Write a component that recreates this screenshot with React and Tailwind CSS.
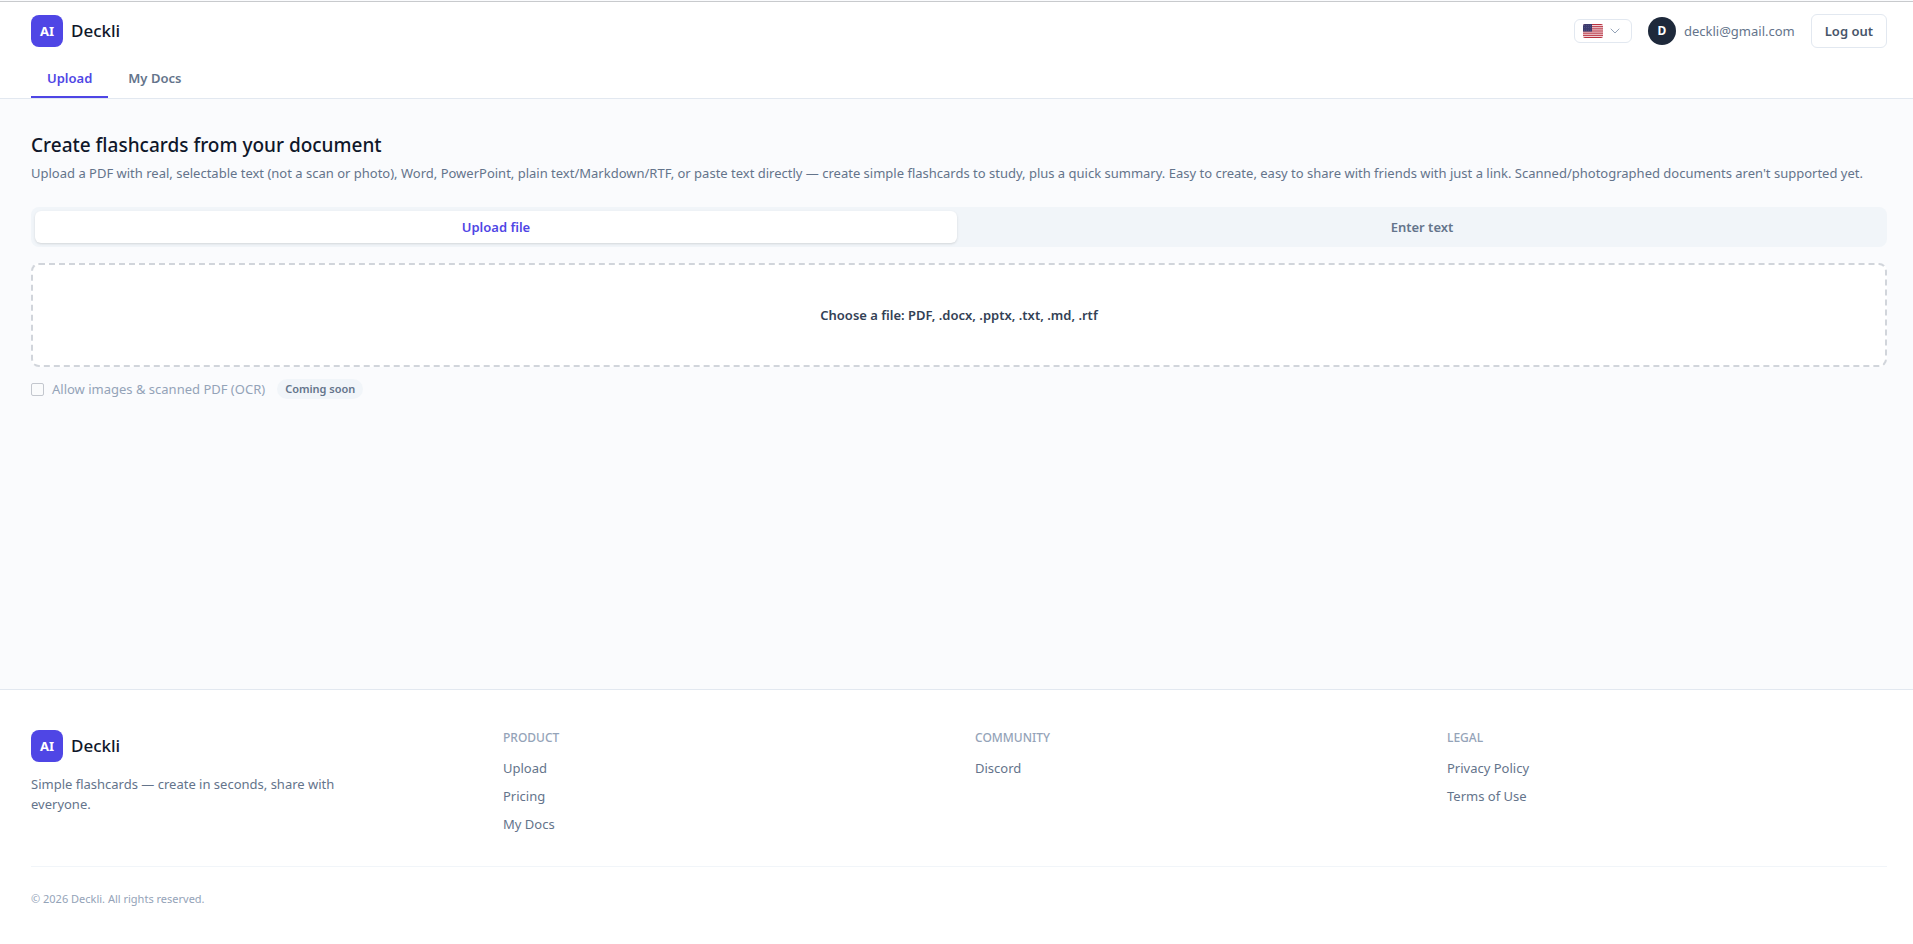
import { useState } from "react";
import { ChevronDown } from "lucide-react";

const footerColumns = [
  { title: "Product", links: ["Upload", "Pricing", "My Docs"] },
  { title: "Community", links: ["Discord"] },
  { title: "Legal", links: ["Privacy Policy", "Terms of Use"] },
];

function Brand() {
  return (
    <a href="#home" className="flex items-center gap-2">
      <span className="flex size-8 items-center justify-center rounded-lg bg-[#4f46e5] text-[13px] leading-5 font-bold text-white">
        AI
      </span>
      <span className="text-[17px] leading-7 font-medium text-[#0f172a]">Deckli</span>
    </a>
  );
}

function UsFlag() {
  return (
    <svg viewBox="0 0 20 14" className="h-3.5 w-5 rounded-xs" aria-hidden="true">
      <rect width="20" height="14" fill="#f3dfe3" />
      {[0, 2, 4, 6, 8, 10, 12].map((y) => (
        <rect key={y} y={y * 1.077} width="20" height="1.077" fill="#b8313f" />
      ))}
      <rect width="9" height="7.54" fill="#3c3b6e" />
      {[1.5, 3.8, 6.1].map((y) =>
        [1.5, 3.5, 5.5, 7.5].map((x) => (
          <circle key={`${x}-${y}`} cx={x} cy={y} r="0.3" fill="#8f8fb5" />
        ))
      )}
    </svg>
  );
}

function Header() {
  return (
    <header className="border-t border-b border-t-[#c8cacd] border-b-[#e2e8f0] bg-white pt-3 pr-[26px] pl-[31px]">
      <div className="flex items-center justify-between">
        <Brand />
        <div className="flex items-center gap-4">
          <button
            type="button"
            aria-label="Language: English (US)"
            className="flex h-6 items-center gap-1 rounded-md border border-[#e2e8f0] bg-white px-2"
          >
            <UsFlag />
            <ChevronDown className="size-4 text-[#94a3b8]" strokeWidth={1.5} />
          </button>
          <div className="flex items-center gap-2">
            <span className="flex size-7 items-center justify-center rounded-full bg-[#1e293b] text-xs font-bold text-white">
              D
            </span>
            <span className="text-[13px] leading-5 text-[#64748b]">deckli@gmail.com</span>
          </div>
          <button
            type="button"
            className="rounded-md border border-[#e2e8f0] bg-white px-[13px] py-1.5 text-[13px] leading-5 font-semibold text-[#475569]"
          >
            Log out
          </button>
        </div>
      </div>
      <nav className="mt-3 flex gap-1 text-[13px] leading-5 font-semibold">
        <a href="#upload" aria-current="page" className="border-b-2 border-[#4f46e5] px-4 py-2 text-[#4f46e5]">
          Upload
        </a>
        <a href="#docs" className="border-b-2 border-transparent px-4 py-2 text-[#64748b]">
          My Docs
        </a>
      </nav>
    </header>
  );
}

function ModeButton({ active, onClick, children }) {
  return (
    <button
      type="button"
      aria-pressed={active}
      onClick={onClick}
      className={
        active
          ? "flex-1 rounded-md bg-white py-1.5 text-[13px] leading-5 font-semibold text-[#4f46e5] shadow-sm"
          : "flex-1 rounded-md py-1.5 text-[13px] leading-5 font-semibold text-[#64748b]"
      }
    >
      {children}
    </button>
  );
}

function UploadPanel() {
  const [mode, setMode] = useState("file");
  return (
    <main className="pt-8 pr-[26px] pb-8 pl-[31px]">
      <h1 className="text-[19px] leading-7 font-medium text-[#0f172a]">Create flashcards from your document</h1>
      <p className="mt-1 text-[13px] leading-5 text-[#64748b]">
        Upload a PDF with real, selectable text (not a scan or photo), Word, PowerPoint, plain text/Markdown/RTF, or
        paste text directly — create simple flashcards to study, plus a quick summary. Easy to create, easy to share
        with friends with just a link. Scanned/photographed documents aren't supported yet.
      </p>
      <div className="mt-6 flex gap-1 rounded-lg bg-[#f1f5f9] p-1">
        <ModeButton active={mode === "file"} onClick={() => setMode("file")}>
          Upload file
        </ModeButton>
        <ModeButton active={mode === "text"} onClick={() => setMode("text")}>
          Enter text
        </ModeButton>
      </div>
      {mode === "file" ? (
        <label className="mt-4 block cursor-pointer rounded-lg border-2 border-dashed border-[#d1d5db] bg-white py-10 text-center text-[13px] leading-5 font-semibold text-[#334155]">
          Choose a file: PDF, .docx, .pptx, .txt, .md, .rtf
          <input type="file" accept=".pdf,.docx,.pptx,.txt,.md,.rtf" className="hidden" />
        </label>
      ) : (
        <textarea
          aria-label="Text"
          className="mt-4 block h-26 w-full rounded-lg border border-[#cbd5e1] bg-white p-3 text-[13px] leading-5"
        />
      )}
      <div className="mt-3 flex items-center gap-3 text-[13px] leading-5 text-[#94a3b8]">
        <label className="flex items-center gap-2">
          <input
            type="checkbox"
            disabled
            className="size-[13px] appearance-none rounded-xs border border-[#c3c7ce] bg-[#fafbfc]"
          />
          Allow images &amp; scanned PDF (OCR)
        </label>
        <span className="rounded-full bg-[#f1f5f9] px-2 py-0.5 text-[11px] leading-4 font-semibold text-[#64748b]">
          Coming soon
        </span>
      </div>
    </main>
  );
}

function Footer() {
  return (
    <footer className="mt-auto border-t border-[#e2e8f0] bg-white pt-10 pr-[26px] pb-[37px] pl-[31px]">
      <div className="grid grid-cols-4 gap-8">
        <div>
          <Brand />
          <p className="mt-3 max-w-xs text-[13px] leading-5 text-[#64748b]">
            Simple flashcards — create in seconds, share with everyone.
          </p>
        </div>
        {footerColumns.map((column) => (
          <div key={column.title}>
            <h2 className="text-xs font-medium text-[#94a3b8] uppercase">{column.title}</h2>
            <ul className="mt-3 flex flex-col gap-2 text-[13px] leading-5 text-[#64748b]">
              {column.links.map((link) => (
                <li key={link}>
                  <a href="#footer">{link}</a>
                </li>
              ))}
            </ul>
          </div>
        ))}
      </div>
      <p className="mt-8 border-t border-[#f1f5f9] pt-6 text-[11px] leading-4 text-[#94a3b8]">
        © 2026 Deckli. All rights reserved.
      </p>
    </footer>
  );
}

export default function App() {
  return (
    <div className="flex min-h-screen flex-col bg-[#fafbfd] pt-px font-['Noto_Sans','Open_Sans',sans-serif]">
      <Header />
      <UploadPanel />
      <Footer />
    </div>
  );
}
